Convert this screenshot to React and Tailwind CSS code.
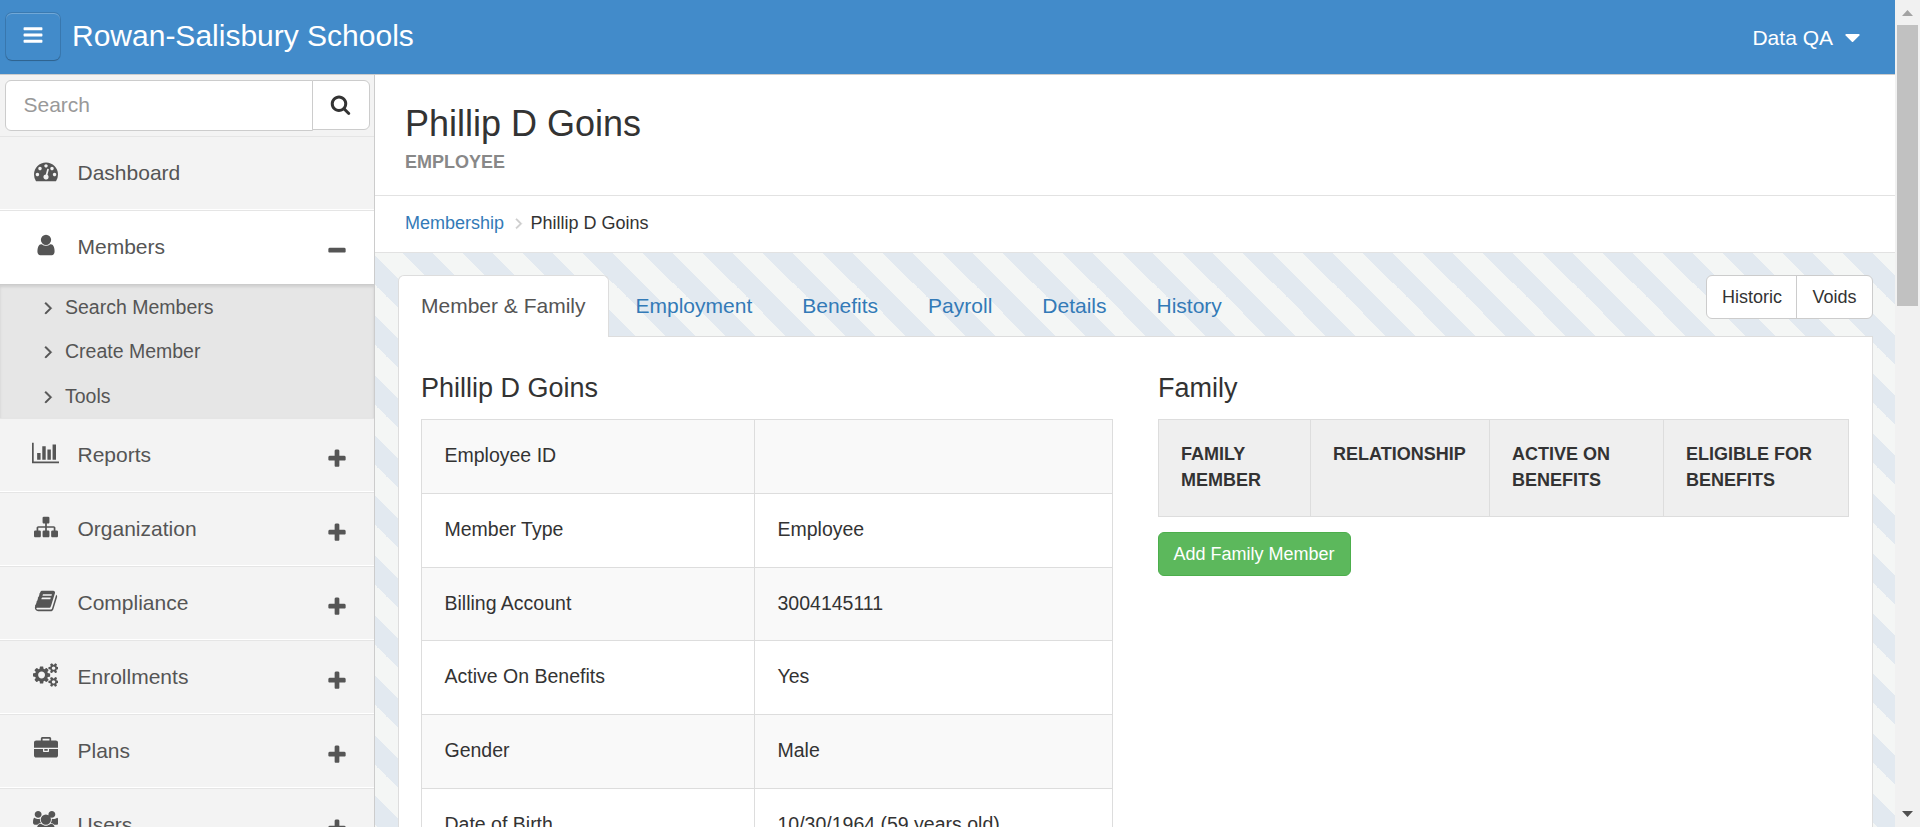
const ICONS = {
  bars: [1792, 'M1664 1344v128q0 26-19 45t-45 19h-1408q-26 0-45-19t-19-45v-128q0-26 19-45t45-19h1408q26 0 45 19t19 45zm0-512v128q0 26-19 45t-45 19h-1408q-26 0-45-19t-19-45v-128q0-26 19-45t45-19h1408q26 0 45 19t19 45zm0-512v128q0 26-19 45t-45 19h-1408q-26 0-45-19t-19-45v-128q0-26 19-45t45-19h1408q26 0 45 19t19 45z'],
  search: [1792, 'M1216 832q0-185-131.5-316.5t-316.5-131.5-316.5 131.5-131.5 316.5 131.5 316.5 316.5 131.5 316.5-131.5 131.5-316.5zm512 832q0 52-38 90t-90 38q-54 0-90-38l-343-342q-179 124-399 124-143 0-273.5-55.5t-225-150-150-225-55.5-273.5 55.5-273.5 150-225 225-150 273.5-55.5 273.5 55.5 225 150 150 225 55.5 273.5q0 220-124 399l343 343q37 37 37 90z'],
  user: [1792, 'M1536 1399q0 109-62.5 187t-150.5 78h-854q-88 0-150.5-78t-62.5-187q0-85 8.5-160.5t31.5-152 58.5-131 94-89 134.5-34.5q131 128 313 128t313-128q76 0 134.5 34.5t94 89 58.5 131 31.5 152 8.5 160.5zm-256-887q0 159-112.5 271.5t-271.5 112.5-271.5-112.5-112.5-271.5 112.5-271.5 271.5-112.5 271.5 112.5 112.5 271.5z'],
  dashboard: [1792, 'M384 1152q0-53-37.5-90.5t-90.5-37.5-90.5 37.5-37.5 90.5 37.5 90.5 90.5 37.5 90.5-37.5 37.5-90.5zm192-448q0-53-37.5-90.5t-90.5-37.5-90.5 37.5-37.5 90.5 37.5 90.5 90.5 37.5 90.5-37.5 37.5-90.5zm428 481l101-382q6-26-7.5-48.5t-38.5-29.5-48 6.5-30 39.5l-101 382q-60 5-107 43.5t-63 98.5q-20 77 20 146t117 89 146-20 89-117q16-60-6-117t-72-91zm660-33q0-53-37.5-90.5t-90.5-37.5-90.5 37.5-37.5 90.5 37.5 90.5 90.5 37.5 90.5-37.5 37.5-90.5zm-640-640q0-53-37.5-90.5t-90.5-37.5-90.5 37.5-37.5 90.5 37.5 90.5 90.5 37.5 90.5-37.5 37.5-90.5zm448 192q0-53-37.5-90.5t-90.5-37.5-90.5 37.5-37.5 90.5 37.5 90.5 90.5 37.5 90.5-37.5 37.5-90.5zm320 448q0 261-141 483-19 29-54 29h-1402q-35 0-54-29-141-221-141-483 0-182 71-348t191-286 286-191 348-71 348 71 286 191 191 286 71 348z'],
  sitemap: [1792, 'M1792 1248v320q0 40-28 68t-68 28h-320q-40 0-68-28t-28-68v-320q0-40 28-68t68-28h96v-192h-512v192h96q40 0 68 28t28 68v320q0 40-28 68t-68 28h-320q-40 0-68-28t-28-68v-320q0-40 28-68t68-28h96v-192h-512v192h96q40 0 68 28t28 68v320q0 40-28 68t-68 28h-320q-40 0-68-28t-28-68v-320q0-40 28-68t68-28h96v-192q0-52 38-90t90-38h512v-192h-96q-40 0-68-28t-28-68v-320q0-40 28-68t68-28h320q40 0 68 28t28 68v320q0 40-28 68t-68 28h-96v192h512q52 0 90 38t38 90v192h96q40 0 68 28t28 68z'],
  chart: [2048, 'M640 896v512h-256v-512h256zm384-512v1024h-256v-1024h256zm1024 1152v128h-2048v-1536h128v1408h1920zm-640-896v768h-256v-768h256zm384-384v1152h-256v-1152h256z'],
  book: [1792, 'M1703 478q40 57 18 129l-275 906q-19 64-76.5 107.5t-122.5 43.5h-923q-77 0-148.5-53.5t-99.5-131.5q-24-67-2-127 0-4 3-27t4-37q1-8-3-21.5t-3-19.5q2-11 8-21t16.5-23.5 16.5-23.5q23-38 45-91.5t30-91.5q3-10 .5-30t-.5-28q3-11 17-28t17-23q21-36 42-92t25-90q1-9-2.5-32t.5-28q4-13 22-30.5t22-22.5q19-26 42.5-84.5t27.5-96.5q1-8-3-25.5t-2-26.5q2-8 9-18t18-23 17-21q8-12 16.5-30.5t15-35 16-36 19.5-32 26.5-23.5 36-11.5 47.5 5.5l-1 3q38-9 51-9h761q74 0 114 56t18 130l-274 906q-36 119-71.5 153.5t-128.5 34.5h-869q-27 0-38 15-11 16-1 43 24 70 144 70h923q29 0 56-15.5t35-41.5l300-987q7-22 5-57 38 15 59 43zm-1064 2q-4 13 2 22.5t20 9.5h608q13 0 25.5-9.5t16.5-22.5l21-64q4-13-2-22.5t-20-9.5h-608q-13 0-25.5 9.5t-16.5 22.5zm-83 256q-4 13 2 22.5t20 9.5h608q13 0 25.5-9.5t16.5-22.5l21-64q4-13-2-22.5t-20-9.5h-608q-13 0-25.5 9.5t-16.5 22.5z'],
  cogs: [1920, 'M896 896q0-106-75-181t-181-75-181 75-75 181 75 181 181 75 181-75 75-181zm768 512q0-52-38-90t-90-38-90 38-38 90q0 53 37.5 90.5t90.5 37.5 90.5-37.5 37.5-90.5zm0-1024q0-52-38-90t-90-38-90 38-38 90q0 53 37.5 90.5t90.5 37.5 90.5-37.5 37.5-90.5zm-384 421v185q0 10-7 19.5t-16 10.5l-155 24q-11 35-32 76 34 48 90 115 7 11 7 20 0 12-7 19-23 30-82.5 89.5t-78.5 59.5q-11 0-21-7l-115-90q-37 19-77 31-11 108-23 155-7 24-30 24h-186q-11 0-20-7.5t-10-17.5l-23-153q-34-10-75-31l-118 89q-7 7-20 7-11 0-21-8-144-133-144-160 0-9 7-19 10-14 41-53t47-61q-23-44-35-82l-152-24q-10-1-17-9.5t-7-19.5v-185q0-10 7-19.5t16-10.5l155-24q11-35 32-76-34-48-90-115-7-11-7-20 0-12 7-20 22-30 82-89t79-59q11 0 21 7l115 90q34-18 77-32 11-108 23-154 7-24 30-24h186q11 0 20 7.5t10 17.5l23 153q34 10 75 31l118-89q8-7 20-7 11 0 21 8 144 133 144 160 0 8-7 19-12 16-42 54t-45 60q23 48 34 82l152 23q10 2 17 10.5t7 19.5zm640 533v140q0 16-149 31-12 27-30 52 51 113 51 138 0 4-4 7-122 71-124 71-8 0-46-47t-52-68q-20 2-30 2t-30-2q-14 21-52 68t-46 47q-2 0-124-71-4-3-4-7 0-25 51-138-18-25-30-52-149-15-149-31v-140q0-16 149-31 13-29 30-52-51-113-51-138 0-4 4-7 4-2 35-20t59-34 30-16q8 0 46 46.5t52 67.5q20-2 30-2t30 2q51-71 92-112l6-2q4 0 124 70 4 3 4 7 0 25-51 138 17 23 30 52 149 15 149 31zm0-1024v140q0 16-149 31-12 27-30 52 51 113 51 138 0 4-4 7-122 71-124 71-8 0-46-47t-52-68q-20 2-30 2t-30-2q-14 21-52 68t-46 47q-2 0-124-71-4-3-4-7 0-25 51-138-18-25-30-52-149-15-149-31v-140q0-16 149-31 13-29 30-52-51-113-51-138 0-4 4-7 4-2 35-20t59-34 30-16q8 0 46 46.5t52 67.5q20-2 30-2t30 2q51-71 92-112l6-2q4 0 124 70 4 3 4 7 0 25-51 138 17 23 30 52 149 15 149 31z'],
  briefcase: [1792, 'M640 256h512v-128h-512v128zm1152 640v480q0 66-47 113t-113 47h-1472q-66 0-113-47t-47-113v-480h672v160q0 26 19 45t45 19h320q26 0 45-19t19-45v-160h672zm-768 0v128h-256v-128h256zm768-480v384h-1792v-384q0-66 47-113t113-47h352v-160q0-40 28-68t68-28h576q40 0 68 28t28 68v160h352q66 0 113 47t47 113z'],
  users: [1920, 'M593 896q-162 5-265 128h-134q-82 0-138-40.5t-56-118.5q0-353 124-353 6 0 43.5 21t97.5 42.5 119 21.5q67 0 133-23-5 37-5 66 0 139 81 256zm1071 637q0 120-73 189.5t-194 69.5h-874q-121 0-194-69.5t-73-189.5q0-53 3.5-103.5t14-109 26.5-108.5 43-97.5 62-81 85.5-53.5 111.5-20q10 0 43 21.5t73 48 107 48 135 21.5 135-21.5 107-48 73-48 43-21.5q61 0 111.5 20t85.5 53.5 62 81 43 97.5 26.5 108.5 14 109 3.5 103.5zm-1024-1277q0 106-75 181t-181 75-181-75-75-181 75-181 181-75 181 75 75 181zm704 384q0 159-112.5 271.5t-271.5 112.5-271.5-112.5-112.5-271.5 112.5-271.5 271.5-112.5 271.5 112.5 112.5 271.5zm576 225q0 78-56 118.5t-138 40.5h-134q-103-123-265-128 81-117 81-256 0-29-5-66 66 23 133 23 59 0 119-21.5t97.5-42.5 43.5-21q124 0 124 353zm-256-609q0 106-75 181t-181 75-181-75-75-181 75-181 181-75 181 75 75 181z'],
  plus: [1792, 'M1600 736v192q0 40-28 68t-68 28h-416v416q0 40-28 68t-68 28h-192q-40 0-68-28t-28-68v-416h-416q-40 0-68-28t-28-68v-192q0-40 28-68t68-28h416v-416q0-40 28-68t68-28h192q40 0 68 28t28 68v416h416q40 0 68 28t28 68z'],
  minus: [1792, 'M1600 736v192q0 40-28 68t-68 28h-1216q-40 0-68-28t-28-68v-192q0-40 28-68t68-28h1216q40 0 68 28t28 68z'],
  angle: [1792, 'M1171 960q0 13-10 23l-466 466q-10 10-23 10t-23-10l-50-50q-10-10-10-23t10-23l393-393-393-393q-10-10-10-23t10-23l50-50q10-10 23-10t23 10l466 466q10 10 10 23z'],
  caret: [1792, 'M1408 704q0 26-19 45l-448 448q-19 19-45 19t-45-19l-448-448q-19-19-19-45t19-45 45-19h896q26 0 45 19t19 45z'],
};

function Icon({ name, className }) {
  const [width, d] = ICONS[name];
  return (
    <svg viewBox={`0 0 ${width} 1792`} className={`shrink-0 fill-current ${className}`} aria-hidden="true">
      <path d={d} />
    </svg>
  );
}

const NAV = [
  { label: 'Dashboard', icon: 'dashboard' },
  { label: 'Members', icon: 'user', open: true, items: ['Search Members', 'Create Member', 'Tools'] },
  { label: 'Reports', icon: 'chart', toggle: true },
  { label: 'Organization', icon: 'sitemap', toggle: true },
  { label: 'Compliance', icon: 'book', toggle: true },
  { label: 'Enrollments', icon: 'cogs', toggle: true },
  { label: 'Plans', icon: 'briefcase', toggle: true },
  { label: 'Users', icon: 'users', toggle: true },
];

const TABS = ['Employment', 'Benefits', 'Payroll', 'Details', 'History'];

const DETAILS = [
  ['Employee ID', ''],
  ['Member Type', 'Employee'],
  ['Billing Account', '3004145111'],
  ['Active On Benefits', 'Yes'],
  ['Gender', 'Male'],
  ['Date of Birth', '10/30/1964 (59 years old)'],
];

function NavItem({ item }) {
  return (
    <li>
      <a
        className={`flex h-[74px] items-center border-t border-b border-t-[#e5e5e5] border-b-white pl-[30px] text-[21px] text-[#555] ${item.open ? 'bg-white' : 'bg-[#f3f3f3]'}`}
      >
        <span className="flex w-[31px] justify-center pb-1">
          <Icon name={item.icon} className="h-6" />
        </span>
        <span className="ml-[16.5px] flex-1">{item.label}</span>
        {item.toggle && <Icon name="plus" className="mr-[26px] mt-2 size-[22px]" />}
        {item.open && <Icon name="minus" className="mr-[26px] mt-2 size-[22px]" />}
      </a>
      {item.items && (
        <ul className="h-[134px] border-t border-[#ccc] bg-[#e6e6e6] shadow-[inset_0_2px_3px_rgba(0,0,0,0.1)]">
          {item.items.map((label) => (
            <li key={label} className="flex h-[44.5px] items-center pl-[38px] text-[19.5px] text-[#555]">
              <Icon name="angle" className="mr-[6px] size-[21px] stroke-current stroke-[40]" />
              {label}
            </li>
          ))}
        </ul>
      )}
    </li>
  );
}

export default function App() {
  return (
    <div className="flex h-[827px] w-[1920px] overflow-hidden bg-white font-['Liberation_Sans',Arial,sans-serif] text-[#333]">
      <div className="flex w-[1895px] flex-col">
        <header className="flex h-[75px] shrink-0 items-center border-b border-[#ccc] bg-[#428bca] text-white">
          <button className="ml-[6px] mb-[2px] flex h-[47px] w-[54px] items-center justify-center rounded-md pr-px pb-[2px] shadow-[inset_0_1px_0_rgba(255,255,255,0.25),0_0_0_1px_rgba(0,0,0,0.12),0_1px_1px_rgba(0,0,0,0.2)]">
            <Icon name="bars" className="size-[22px]" />
          </button>
          <h1 className="ml-3 flex-1 pb-[2px] text-[30px] leading-9">Rowan-Salisbury Schools</h1>
          <span className="pt-px text-[21px]">Data QA</span>
          <Icon name="caret" className="ml-[6.5px] mr-[30.5px] size-[25px]" />
        </header>

        <div className="flex min-h-0 flex-1">
          <aside className="w-[375px] shrink-0 overflow-hidden border-r border-[#ccc] bg-[#f3f3f3]">
            <div className="flex h-[61px] items-start pt-[5px] pl-[5px]">
              <div className="flex h-[51px] w-[308px] items-center rounded-l-md border border-[#ccc] bg-white pb-[2px] pl-[17.5px] text-[21px] text-[#999]">
                Search
              </div>
              <button className="-ml-px flex h-[50px] w-[58px] items-center justify-center rounded-r-md border border-[#ccc] bg-white pr-px pb-px">
                <Icon name="search" className="size-[21px]" />
              </button>
            </div>
            <ul>
              {NAV.map((item) => (
                <NavItem key={item.label} item={item} />
              ))}
            </ul>
          </aside>

          <main className="flex min-w-0 flex-1 flex-col">
            <div className="h-[121px] shrink-0 border-b border-[#e2e2e2] pt-[29px] pl-[30px]">
              <h2 className="text-[36px] leading-10">Phillip D Goins</h2>
              <p className="mt-[6px] text-[18px] leading-6 font-bold text-[#888]">EMPLOYEE</p>
            </div>
            <nav className="flex h-[57px] shrink-0 items-center border-b border-[#e2e2e2] pb-[2px] pl-[30px] text-[18px]">
              <a className="text-[#337ab7]">Membership</a>
              <Icon name="angle" className="mr-[2.5px] ml-[6px] size-[18px] stroke-current stroke-[60] text-[#ccc]" />
              <span>Phillip D Goins</span>
            </nav>

            <div className="min-h-0 flex-1 bg-[#f4f6f5] bg-[linear-gradient(45deg,transparent_25%,#e2e9f0_25%,#e2e9f0_50%,transparent_50%,transparent_75%,#e2e9f0_75%)] bg-[size:60px_60px] bg-[position:-2px_0] pt-[22px] pr-[22px] pl-[23px]">
              <div className="flex h-[61px] items-start justify-between">
                <ul className="flex text-[21px]">
                  <li className="relative z-10 flex h-[62px] w-[211px] items-center rounded-t-md border border-b-0 border-[#ddd] bg-white pb-px pl-[22px] text-[#555]">
                    Member &amp; Family
                  </li>
                  {TABS.map((tab) => (
                    <li key={tab} className="ml-[3px] flex h-[62px] items-center px-[23.5px] text-[#337ab7]">
                      {tab}
                    </li>
                  ))}
                </ul>
                <div className="flex h-11 w-[167px] divide-x divide-[#ccc] rounded-md border border-[#ccc] bg-white text-[18px]">
                  <button className="w-[90px] pl-px">Historic</button>
                  <button className="flex-1">Voids</button>
                </div>
              </div>

              <section className="flex h-[520px] gap-[45px] border border-[#ddd] bg-white pl-[22px]">
                <div className="w-[692px]">
                  <h3 className="pt-9 text-[27px] leading-[30px]">Phillip D Goins</h3>
                  <dl className="mt-4 border-x border-t border-[#ddd] text-[19.5px]">
                    {DETAILS.map(([label, value]) => (
                      <div key={label} className="flex h-[73.8px] border-b border-[#ddd] odd:bg-[#f9f9f9]">
                        <dt className="flex w-[333px] items-center border-r border-[#ddd] pb-[1.5px] pl-[22.5px]">{label}</dt>
                        <dd className="flex items-center pb-[1.5px] pl-[22.5px]">{value}</dd>
                      </div>
                    ))}
                  </dl>
                </div>
                <div className="w-[691px]">
                  <h3 className="pt-9 text-[27px] leading-[30px]">Family</h3>
                  <div className="mt-4 flex h-[98px] divide-x divide-[#ddd] border border-[#ddd] bg-[#efefef] text-[18px] leading-[26px] font-bold [&>div]:pt-[21px] [&>div]:pl-[22px]">
                    <div className="w-[152px]">FAMILY<br />MEMBER</div>
                    <div className="w-[179px]">RELATIONSHIP</div>
                    <div className="w-[174px]">ACTIVE ON<br />BENEFITS</div>
                    <div className="flex-1">ELIGIBLE FOR<br />BENEFITS</div>
                  </div>
                  <button className="mt-[15px] h-11 w-[193px] rounded-md border border-[#4cae4c] bg-[#5cb85c] pr-px text-[18px] text-white">
                    Add Family Member
                  </button>
                </div>
              </section>
            </div>
          </main>
        </div>
      </div>

      <div className="flex w-[25px] flex-col items-center bg-[#f1f1f1]">
        <svg viewBox="0 0 25 25" className="size-[25px]"><path d="M7 16l5.5-6 5.5 6z" fill="#a3a3a3" /></svg>
        <div className="h-[281px] w-[21px] bg-[#c1c1c1]" />
        <div className="flex-1" />
        <svg viewBox="0 0 25 25" className="size-[25px]"><path d="M7 9l5.5 6 5.5-6z" fill="#505050" /></svg>
      </div>
    </div>
  );
}
